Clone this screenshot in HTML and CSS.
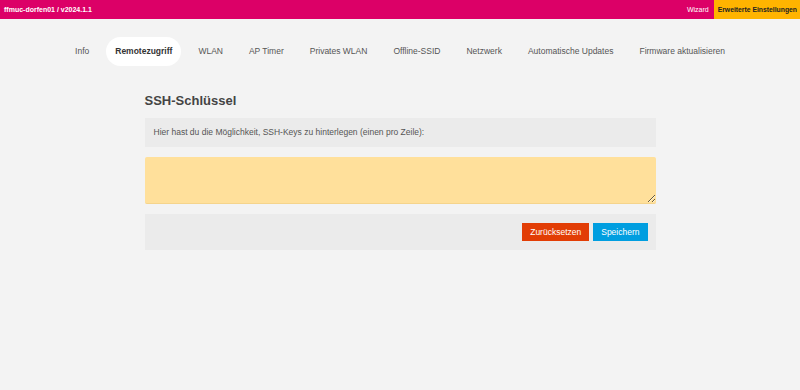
FILE: index.html
```html
<!DOCTYPE html>
<html lang="de">
<head>
  <meta charset="UTF-8" />
  <title>ffmuc-dorfen01 - Remotezugriff</title>
  <link rel="stylesheet" href="styles.css">
</head>
<body>
  <header class="topbar">
    <span class="hostname">ffmuc-dorfen01 / v2024.1.1</span>
    <nav class="modes">
      <a href="#" class="mode">Wizard</a>
      <a href="#" class="mode active">Erweiterte Einstellungen</a>
    </nav>
  </header>

  <ul class="tabs">
    <li><a href="#">Info</a></li>
    <li class="active"><a href="#">Remotezugriff</a></li>
    <li><a href="#">WLAN</a></li>
    <li><a href="#">AP Timer</a></li>
    <li><a href="#">Privates WLAN</a></li>
    <li><a href="#">Offline-SSID</a></li>
    <li><a href="#">Netzwerk</a></li>
    <li><a href="#">Automatische Updates</a></li>
    <li><a href="#">Firmware aktualisieren</a></li>
  </ul>

  <form class="section">
    <h2>SSH-Schlüssel</h2>
    <div class="description">Hier hast du die Möglichkeit, SSH-Keys zu hinterlegen (einen pro Zeile):</div>
    <textarea class="keys" rows="4"></textarea>
    <div class="actions">
      <button type="reset" class="btn reset">Zurücksetzen</button>
      <button type="submit" class="btn save">Speichern</button>
    </div>
  </form>
</body>
</html>
```

FILE: styles.css
```css
body {
  margin: 0;
  font-family: "Liberation Sans", Arial, sans-serif;
  background: #f3f3f3;
  color: #404040;
}

.topbar {
  display: flex;
  justify-content: space-between;
  align-items: stretch;
  height: 19px;
  background: #dc0067;
  color: white;
  font-size: 7px;
}

.hostname {
  font-weight: bold;
  padding: 0 4px;
  line-height: 19px;
}

.modes {
  display: flex;
}

.mode {
  color: white;
  text-decoration: none;
  line-height: 19px;
  padding: 0 5px;
}

.mode.active {
  background: #ffb400;
  color: #222;
  font-weight: bold;
  font-size: 6.8px;
  padding: 0 3px 0 4px;
}

.tabs {
  list-style: none;
  margin: 18px 0 0 0;
  padding: 0;
  display: flex;
  justify-content: center;
  gap: 8px;
  font-size: 8.5px;
}

.tabs a {
  display: block;
  padding: 0 9px;
  line-height: 29px;
  color: #555;
  text-decoration: none;
  border-radius: 15px;
}

.tabs .active a {
  background: white;
  color: #333;
  font-weight: bold;
}

.section {
  width: 511px;
  margin: 26px auto 0 auto;
}

h2 {
  margin: 0 0 8px 0;
  font-size: 13px;
  color: #444;
  line-height: 18px;
}

.description {
  background: #ebebeb;
  padding: 0 9px;
  line-height: 29px;
  font-size: 8.5px;
  color: #555;
}

.keys {
  display: block;
  box-sizing: border-box;
  width: 100%;
  height: 47px;
  margin: 10px 0;
  background: #ffe09b;
  border: none;
  border-bottom: 1px solid #f5d48c;
  border-radius: 2px;
  font-family: "Liberation Mono", monospace;
  resize: vertical;
}

.actions {
  background: #ebebeb;
  display: flex;
  justify-content: flex-end;
  gap: 4px;
  padding: 9px 8px;
}

.btn {
  border: none;
  height: 18px;
  padding: 0 8px;
  color: white;
  font-family: inherit;
  font-size: 8.5px;
  cursor: pointer;
}

.reset {
  background: #e23d05;
}

.save {
  background: #009ee0;
}
```
